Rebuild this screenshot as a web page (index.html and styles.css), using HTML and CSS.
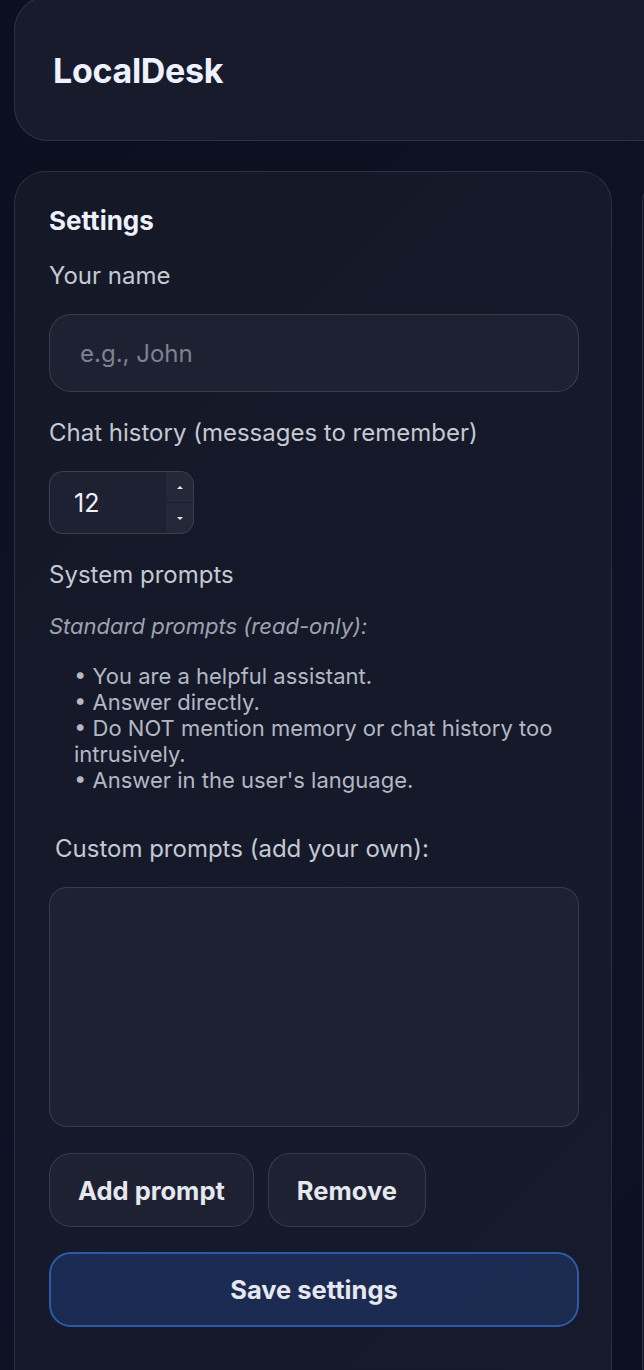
FILE: index.html
```html
<!DOCTYPE html>
<html lang="en">
<head>
  <meta charset="UTF-8" />
  <title>LocalDesk</title>
  <link rel="stylesheet" href="styles.css">
</head>
<body>

  <div class="app">
    <header class="topbar">
      <h1>LocalDesk</h1>
    </header>

    <main class="columns">
      <section class="panel settings">
        <h2>Settings</h2>

        <label for="userName">Your name</label>
        <input type="text" id="userName" class="field" placeholder="e.g., John" />

        <label for="historySize">Chat history (messages to remember)</label>
        <div class="number-box">
          <input type="number" id="historySize" value="12" min="1" max="100" />
          <div class="spin">
            <span class="up"></span>
            <span class="down"></span>
          </div>
        </div>

        <label>System prompts</label>
        <p class="hint">Standard prompts (read-only):</p>
        <div class="std-prompts">• You are a helpful assistant.<br>• Answer directly.<br>• Do NOT mention memory or chat history too intrusively.<br>• Answer in the user's language.</div>

        <label for="customPrompts" class="custom-label">Custom prompts (add your own):</label>
        <textarea id="customPrompts" class="field prompts"></textarea>

        <div class="btn-row">
          <button type="button" class="btn">Add prompt</button>
          <button type="button" class="btn">Remove</button>
        </div>

        <button type="button" class="btn primary">Save settings</button>
      </section>

      <section class="panel chat"></section>
    </main>
  </div>

</body>
</html>
```

FILE: styles.css
```css
html, body {
  overflow: hidden;
}

body {
  margin: 0;
  font-family: 'Inter', 'Noto Sans', sans-serif;
  background: linear-gradient(135deg, #0b1020, #0d1226 60%, #0b1020);
  color: #c9cdd8;
  min-height: 100vh;
}

.app {
  width: 1400px;
  padding: 0 14px;
}

.topbar {
  box-sizing: border-box;
  height: 145px;
  margin-top: -4px;
  display: flex;
  align-items: center;
  padding: 4px 38px 0;
  border: 1px solid rgba(255,255,255,0.1);
  border-radius: 34px;
  background: linear-gradient(135deg, #171b2c, #161a2a);
}

.topbar h1 {
  margin: 0;
  font-size: 34px;
  font-weight: 700;
  color: #eef2ff;
  letter-spacing: -0.3px;
}

.columns {
  display: grid;
  grid-template-columns: 598px 1fr;
  gap: 30px;
  margin-top: 30px;
}

.panel {
  border: 1px solid rgba(255,255,255,0.1);
  border-radius: 32px;
  background: linear-gradient(135deg, #141827, #161a2b);
  min-height: 1300px;
}

.settings {
  display: flex;
  flex-direction: column;
  align-items: flex-start;
  padding: 34px 32px 40px 34px;
}

h2 {
  margin: 0;
  font-size: 26px;
  line-height: 29px;
  font-weight: 700;
  color: #eef1fb;
}

label {
  display: block;
  margin: 26px 0 24px;
  font-size: 24px;
  line-height: 29px;
  color: #c5c9d3;
}

.field {
  box-sizing: border-box;
  width: 100%;
  border: 1px solid rgba(255,255,255,0.12);
  border-radius: 22px;
  background: #1d2132;
  color: #e8ebf3;
  font-family: inherit;
  font-size: 24px;
  outline: none;
}

input.field {
  height: 78px;
  padding: 0 30px;
}

.field::placeholder {
  color: #7d8291;
}

.number-box {
  box-sizing: border-box;
  display: flex;
  width: 145px;
  height: 63px;
  border: 1px solid rgba(255,255,255,0.14);
  border-radius: 14px;
  background: #1d2132;
  overflow: hidden;
}

.number-box input {
  flex: 1;
  min-width: 0;
  border: none;
  background: transparent;
  color: #eef1f8;
  font-family: inherit;
  font-size: 25px;
  padding: 0 0 0 24px;
  outline: none;
  -moz-appearance: textfield;
}

.number-box input::-webkit-inner-spin-button,
.number-box input::-webkit-outer-spin-button {
  -webkit-appearance: none;
  margin: 0;
}

.spin {
  width: 27px;
  display: flex;
  flex-direction: column;
  background: #242939;
}

.spin span {
  flex: 1;
  display: flex;
  align-items: center;
  justify-content: center;
}

.spin .up {
  border-bottom: 1px solid #1a1e2c;
}

.spin span::after {
  content: "";
  border-left: 3px solid transparent;
  border-right: 3px solid transparent;
}

.spin .up::after {
  border-bottom: 3px solid #e6e9f0;
}

.spin .down::after {
  border-top: 3px solid #e6e9f0;
}

.hint {
  margin: 0 0 24px;
  font-size: 22px;
  line-height: 26px;
  font-style: italic;
  color: #9ea3b0;
}

.std-prompts {
  padding-left: 25px;
  font-size: 22px;
  line-height: 26px;
  color: #b3b8c4;
}

.custom-label {
  margin-top: 41px;
  padding-left: 6px;
}

textarea.prompts {
  height: 240px;
  border-radius: 18px;
  resize: none;
  padding: 16px 20px;
}

.btn-row {
  display: flex;
  gap: 14px;
  margin-top: 26px;
}

.btn {
  box-sizing: border-box;
  height: 74px;
  padding: 0 28px;
  border: 1px solid rgba(255,255,255,0.12);
  border-radius: 22px;
  background: #1d2132;
  color: #e6e8ef;
  font-family: inherit;
  font-size: 25.5px;
  font-weight: 700;
  cursor: pointer;
}

.btn.primary {
  width: 100%;
  height: 75px;
  margin-top: 25px;
  padding: 0;
  background: linear-gradient(135deg, #1b2a52, #1b2b50);
  border: 2px solid #2d5aa8;
}
```
